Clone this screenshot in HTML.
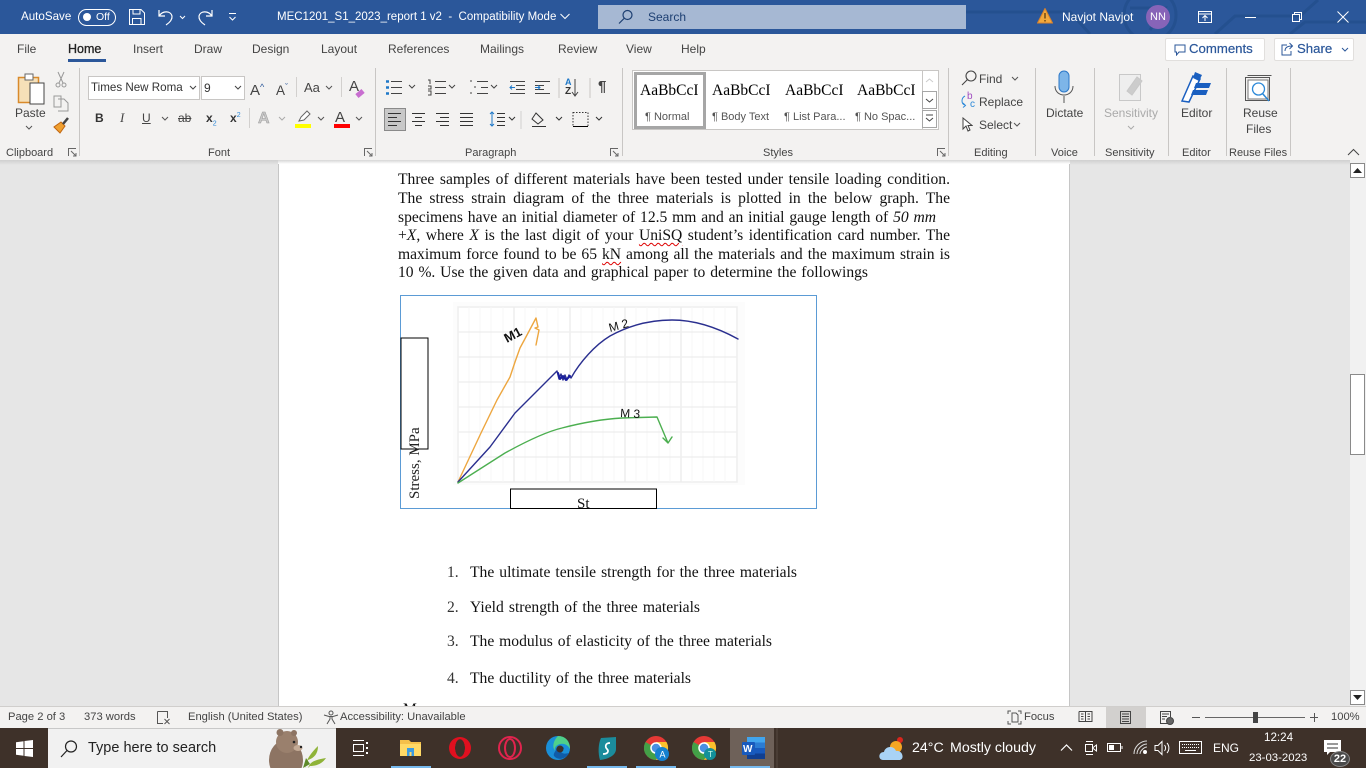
<!DOCTYPE html>
<html><head><meta charset="utf-8"><title>Word</title>
<style>
html,body{margin:0;padding:0;width:1366px;height:768px;overflow:hidden;background:#e6e6e6;font-family:"Liberation Sans",sans-serif;font-size:12px;color:#444}
.a,.t,svg{position:absolute}
.t{white-space:nowrap;line-height:16px}
.w{color:#fff}
.sep{position:absolute;top:68px;height:88px;width:1px;background:#c8c6c4}
.lab{position:absolute;top:145px;line-height:16px;font-size:11px;color:#444;white-space:nowrap;text-align:center}
.d{font-family:"Liberation Serif",serif;font-size:15.6px;line-height:19px;color:#111;position:absolute;white-space:nowrap}
.j{text-align:justify;text-align-last:justify;white-space:normal}
.sg{text-decoration:underline wavy #d00 1px;text-underline-offset:2px}
.st{position:absolute;font-family:"Liberation Serif",serif;font-size:15.5px;color:#000;top:82px;white-space:nowrap}
.sl{position:absolute;font-size:11px;color:#555;top:109px;white-space:nowrap;line-height:16px}
.ts{color:#fff;font-size:14.2px}
.ss{font-size:11.2px}
</style></head><body>

<!-- Title bar -->
<div class="a" style="left:0;top:0;width:1366px;height:34px;background:#2b579a"></div>
<svg style="left:960px;top:0" width="406" height="34" fill="none" stroke="#24508f" stroke-width="3"><circle cx="190" cy="15" r="26"/><path d="M0 12H110L130 34M170 8H205L190 30M255 34L275 16H340L358 0M330 34L345 22H406"/></svg>
<div class="t w" style="left:21px;top:9px;font-size:11.6px">AutoSave</div>
<div class="a" style="left:78px;top:9px;width:36px;height:15px;border:1px solid #fff;border-radius:9px"></div>
<div class="a" style="left:83px;top:13px;width:8px;height:8px;background:#fff;border-radius:50%"></div>
<div class="t w" style="left:96px;top:9px;font-size:10.5px">Off</div>
<svg style="left:128px;top:8px" width="18" height="18" fill="none" stroke="#fff"><path d="M1.5 1.5H13L16.5 5V16.5H1.5ZM5 1.5V6H12V1.5M4.5 16.5V10.5H13V16.5"/></svg>
<svg style="left:157px;top:8px" width="60" height="20" fill="none" stroke="#fff" stroke-width="1.2"><path d="M2 2V8H8M2 8C6 2 14 3 15 8C15.500 12 12 15 9 17"/><path d="M23 8L25.500 10.500L28 8" stroke-width="1"/><path d="M55 2V8H49M55 8C51 2 43 3 42 8C41.500 12 45 15 48 17" /></svg>
<svg style="left:228px;top:12px" width="10" height="10" fill="none" stroke="#fff"><path d="M1 1.500H8M1.500 5L4.500 8L7.500 5"/></svg>
<div class="t w" style="left:277px;top:9px;font-size:11.5px">MEC1201_S1_2023_report 1 v2&nbsp; -&nbsp; Compatibility Mode</div>
<svg style="left:560px;top:13px" width="10" height="7" fill="none" stroke="#fff"><path d="M.5 1L5 5.500L9.500 1"/></svg>
<div class="a" style="left:598px;top:5px;width:368px;height:24px;background:#a6b8d3"></div>
<svg style="left:618px;top:9px" width="16" height="16" fill="none" stroke="#1d3f72" stroke-width="1.200"><circle cx="9.500" cy="6" r="4.500"/><path d="M6 9.500L1 14.500"/></svg>
<div class="t" style="left:648px;top:9px;color:#1d3f72">Search</div>
<svg style="left:1037px;top:8px" width="16" height="16"><path d="M8 .5L15.500 15H.5Z" fill="#f3a93c" stroke="#d9822b"/><path d="M8 5V10.500M8 12V13.500" stroke="#5c3a10" stroke-width="1.300"/></svg>
<div class="t w" style="left:1062px;top:9px">Navjot Navjot</div>
<div class="a w" style="left:1146px;top:5px;width:24px;height:24px;border-radius:50%;background:#8764b8;text-align:center;line-height:24px;font-size:11px">NN</div>
<svg style="left:1198px;top:10px" width="14" height="14" fill="none" stroke="#fff"><path d="M.5 1.500H13.500V12.500H.5ZM.5 4H13.500M7 11V6M4.500 8L7 5.500L9.500 8"/></svg>
<div class="a" style="left:1245px;top:17px;width:11px;height:1px;background:#fff"></div>
<svg style="left:1291px;top:11px" width="12" height="12" fill="none" stroke="#fff"><path d="M1.500 3.500H8.500V10.500H1.500ZM3.500 3.500V1.500H10.500V8.500H8.500"/></svg>
<svg style="left:1337px;top:11px" width="12" height="12" stroke="#fff"><path d="M.5.5L11.500 11.500M11.500.5L.5 11.500"/></svg>

<!-- Ribbon -->
<div class="a" style="left:0;top:34px;width:1366px;height:126px;background:#f3f2f1"></div>
<div class="a" style="left:0;top:160px;width:1366px;height:5px;background:linear-gradient(#cfcfcf,#e6e6e6)"></div>
<div class="t" style="left:17px;top:41px">File</div>
<div class="t" style="left:68px;top:41px;font-size:12.5px;color:#222;-webkit-text-stroke:.3px #222">Home</div>
<div class="a" style="left:68px;top:59px;width:38px;height:3px;background:#2b579a"></div>
<div class="t" style="left:133px;top:41px">Insert</div>
<div class="t" style="left:194px;top:41px">Draw</div>
<div class="t" style="left:252px;top:41px">Design</div>
<div class="t" style="left:321px;top:41px">Layout</div>
<div class="t" style="left:388px;top:41px">References</div>
<div class="t" style="left:480px;top:41px">Mailings</div>
<div class="t" style="left:558px;top:41px">Review</div>
<div class="t" style="left:626px;top:41px">View</div>
<div class="t" style="left:681px;top:41px">Help</div>
<div class="a" style="left:1165px;top:38px;width:98px;height:21px;background:#fff;border:1px solid #e1dfdd;border-radius:2px"></div>
<svg style="left:1174px;top:44px" width="12" height="12" fill="none" stroke="#2b579a"><path d="M1 1H11V8H5L2.500 11V8H1Z"/></svg>
<div class="t" style="left:1189px;top:41px;color:#2b579a;font-size:13.2px;-webkit-text-stroke:.2px #2b579a">Comments</div>
<div class="a" style="left:1274px;top:38px;width:78px;height:21px;background:#fff;border:1px solid #e1dfdd;border-radius:2px"></div>
<svg style="left:1281px;top:42px" width="13" height="14" fill="none" stroke="#2b579a"><path d="M6 3H1V13H10V9M4 9C4 5 7 4 11 4M8.500 1L11.500 4L8.500 7"/></svg>
<div class="t" style="left:1297px;top:41px;color:#2b579a;font-size:13.2px;-webkit-text-stroke:.2px #2b579a">Share</div>
<svg style="left:1341px;top:47px" width="8" height="6" fill="none" stroke="#2b579a"><path d="M1 1L4 4L7 1"/></svg>

<!-- Clipboard -->
<svg style="left:17px;top:72px" width="30" height="34"><rect x="1.500" y="5.500" width="20" height="25" fill="#f6e0b8" stroke="#d98a2b" stroke-width="1.500"/><rect x="8" y="2" width="8" height="6" fill="#fff" stroke="#666"/><rect x="13" y="11" width="14" height="21" fill="#fff" stroke="#444"/></svg>
<div class="t" style="left:15px;top:105px">Paste</div>
<svg style="left:25px;top:125px" width="8" height="6" fill="none" stroke="#555"><path d="M1 1L4 4L7 1"/></svg>
<svg style="left:54px;top:71px" width="14" height="17" fill="none" stroke="#999"><circle cx="4" cy="14" r="2"/><circle cx="10" cy="14" r="2"/><path d="M5 12L10 1M9 12L4 1"/></svg>
<svg style="left:53px;top:95px" width="16" height="17" fill="none" stroke="#999"><path d="M1 1H8V12H1ZM5 4H11L15 8V16H5"/></svg>
<svg style="left:53px;top:117px" width="17" height="17"><path d="M1 10L7 16L12 9L8 5Z" fill="#f0a030" stroke="#c06510"/><path d="M10 7L15 1" stroke="#444" stroke-width="2.500"/></svg>
<div class="lab" style="left:6px">Clipboard</div>
<svg style="left:68px;top:148px" width="9" height="9" fill="none" stroke="#666"><path d="M.5 8V.5H8M3 3L8 8M8 5V8H5"/></svg>
<div class="sep" style="left:79px"></div>

<!-- Font -->
<div class="a" style="left:88px;top:76px;width:110px;height:22px;background:#fff;border:1px solid #c8c6c4"></div>
<div class="t" style="left:91px;top:80px;color:#333;font-size:11.6px">Times New Roma</div>
<svg style="left:189px;top:85px" width="8" height="6" fill="none" stroke="#444"><path d="M1 1L4 4L7 1"/></svg>
<div class="a" style="left:201px;top:76px;width:42px;height:22px;background:#fff;border:1px solid #c8c6c4"></div>
<div class="t" style="left:204px;top:80px;color:#333">9</div>
<svg style="left:234px;top:85px" width="8" height="6" fill="none" stroke="#444"><path d="M1 1L4 4L7 1"/></svg>
<div class="t" style="left:250px;top:79px;font-size:15px">A<span style="font-size:9px;color:#2b579a;vertical-align:5px">^</span></div>
<div class="t" style="left:276px;top:79px;font-size:13.500px">A<span style="font-size:9px;color:#2b579a;vertical-align:5px">ˇ</span></div>
<div class="t" style="left:304px;top:80px;font-size:13px">Aa</div>
<svg style="left:325px;top:85px" width="8" height="6" fill="none" stroke="#555"><path d="M1 1L4 4L7 1"/></svg>
<div class="a" style="left:296px;top:77px;width:1px;height:20px;background:#d2d0ce"></div>
<div class="a" style="left:341px;top:77px;width:1px;height:20px;background:#d2d0ce"></div>
<div class="t" style="left:349px;top:79px;font-size:15px">A</div>
<div class="a" style="left:356px;top:91px;width:8px;height:5px;background:#c86ed0;transform:rotate(-40deg)"></div>
<div class="t" style="left:95px;top:110px;font-weight:bold;color:#333">B</div>
<div class="t" style="left:120px;top:110px;font-style:italic;font-family:'Liberation Serif',serif;font-size:13px">I</div>
<div class="t" style="left:142px;top:110px;text-decoration:underline">U</div>
<svg style="left:161px;top:116px" width="8" height="6" fill="none" stroke="#555"><path d="M1 1L4 4L7 1"/></svg>
<div class="t" style="left:178px;top:110px;text-decoration:line-through;font-size:12px">ab</div>
<div class="t" style="left:206px;top:110px;font-weight:bold;color:#333">x<sub style="font-size:7px;color:#2b88d8;font-weight:normal">2</sub></div>
<div class="t" style="left:230px;top:110px;font-weight:bold;color:#333">x<sup style="font-size:7px;color:#2b88d8;font-weight:normal;line-height:0">2</sup></div>
<div class="a" style="left:249px;top:108px;width:1px;height:20px;background:#d2d0ce"></div>
<div class="t" style="left:258px;top:111px;font-size:16px;font-weight:bold;color:#c8c8c8;-webkit-text-stroke:.5px #999">A</div>
<svg style="left:278px;top:116px" width="8" height="6" fill="none" stroke="#aaa"><path d="M1 1L4 4L7 1"/></svg>
<svg style="left:296px;top:110px" width="17" height="14"><path d="M3 11L5 7L11 1L14 4L8 10Z" fill="#fff" stroke="#666"/></svg>
<div class="a" style="left:295px;top:124px;width:16px;height:4px;background:#ff0"></div>
<svg style="left:317px;top:116px" width="8" height="6" fill="none" stroke="#555"><path d="M1 1L4 4L7 1"/></svg>
<div class="t" style="left:335px;top:110px;font-size:15px">A</div>
<div class="a" style="left:334px;top:124px;width:16px;height:4px;background:#f00"></div>
<svg style="left:355px;top:116px" width="8" height="6" fill="none" stroke="#555"><path d="M1 1L4 4L7 1"/></svg>
<div class="lab" style="left:208px">Font</div>
<svg style="left:364px;top:148px" width="9" height="9" fill="none" stroke="#666"><path d="M.5 8V.5H8M3 3L8 8M8 5V8H5"/></svg>
<div class="sep" style="left:375px"></div>

<!-- Paragraph -->
<svg style="left:385px;top:78px" width="240" height="20" fill="none" stroke="#444">
<path d="M6 3.500H17M6 9.500H17M6 15.500H17"/><path d="M1 3.500H4M1 9.500H4M1 15.500H4" stroke="#1e78c8" stroke-width="2.500"/>
<path d="M24 7L27 10L30 7"/>
<path d="M50 3.500H61M50 9.500H61M50 15.500H61M43 2H45V6M43 8H46V11H43M43 13H46V17H43" />
<path d="M64 7L67 10L70 7"/>
<path d="M92 3.500H103M96 9.500H103M92 15.500H103M85 3H87M89 9H91M85 15H87" />
<path d="M106 7L109 10L112 7"/>
<path d="M125 3.500H140M131 7.500H140M131 11.500H140M125 15.500H140"/><path d="M130 9.500H125M127 7.500L125 9.500L127 11.500" stroke="#1e78c8"/>
<path d="M150 3.500H165M150 7.500H159M150 11.500H159M150 15.500H165"/><path d="M150 9.500H155M153 7.500L155 9.500L153 11.500" stroke="#1e78c8"/>
<path d="M174 0V20" stroke="#c8c6c4"/>
<path d="M190 1V17M187 14L190 18L193 14"/>
<path d="M205 0V20" stroke="#c8c6c4"/>
</svg>
<div class="t" style="left:565px;top:74px;font-size:9px;color:#1e78c8;font-weight:bold">A</div>
<div class="t" style="left:565px;top:84px;font-size:10px;color:#333;font-weight:bold">Z</div>
<div class="t" style="left:598px;top:79px;font-size:15px;color:#444;font-weight:bold">¶</div>
<div class="a" style="left:384px;top:108px;width:20px;height:21px;background:#c8c8c8;border:1px solid #8a8a8a"></div>
<svg style="left:386px;top:111px" width="240" height="18" fill="none" stroke="#333">
<path d="M2 2.500H15M2 6.500H11M2 10.500H15M2 14.500H11"/>
<path d="M26 2.500H39M29 6.500H36M26 10.500H39M29 14.500H36"/>
<path d="M50 2.500H63M54 6.500H63M50 10.500H63M54 14.500H63"/>
<path d="M74 2.500H87M74 6.500H87M74 10.500H87M74 14.500H87"/>
<path d="M111 2.500H119M111 6.500H119M111 10.500H119M111 14.500H119"/>
<path d="M106 1V15M104 3L106 1L108 3M104 13L106 15L108 13" stroke="#1e78c8"/>
<path d="M123 6L126 9L129 6"/>
<path d="M135 0V18" stroke="#d2d0ce"/>
<path d="M150 2L157 9L152 13L146 8ZM146 15.500H160"/>
<path d="M170 6L173 9L176 6"/>
<path d="M187 1.500H202V15.500H187Z" stroke-dasharray="1.500 1.500"/><path d="M187 15.500H202" stroke="#000"/>
<path d="M210 6L213 9L216 6"/>
</svg>
<div class="lab" style="left:465px">Paragraph</div>
<svg style="left:610px;top:148px" width="9" height="9" fill="none" stroke="#666"><path d="M.5 8V.5H8M3 3L8 8M8 5V8H5"/></svg>
<div class="sep" style="left:622px"></div>

<!-- Styles -->
<div class="a" style="left:632px;top:70px;width:305px;height:58px;background:#fff;border:1px solid #c8c6c4"></div>
<div class="a" style="left:634px;top:72px;width:66px;height:51px;border:3px solid #a6a6a6"></div>
<div class="st" style="left:640px;width:60px;overflow:hidden">AaBbCcI</div>
<div class="st" style="left:712px;width:60px;overflow:hidden">AaBbCcI</div>
<div class="st" style="left:785px;width:60px;overflow:hidden">AaBbCcI</div>
<div class="st" style="left:857px;width:60px;overflow:hidden">AaBbCcI</div>
<div class="sl" style="left:645px">¶ Normal</div>
<div class="sl" style="left:712px">¶ Body Text</div>
<div class="sl" style="left:784px">¶ List Para...</div>
<div class="sl" style="left:855px">¶ No Spac...</div>
<div class="a" style="left:922px;top:71px;width:15px;height:58px;background:#fff;border-left:1px solid #c8c6c4"></div>
<div class="a" style="left:922px;top:91px;width:15px;height:18px;background:#fff;border:1px solid #a6a6a6;box-sizing:border-box"></div>
<div class="a" style="left:922px;top:110px;width:15px;height:18px;background:#fff;border:1px solid #a6a6a6;box-sizing:border-box"></div>
<svg style="left:925px;top:77px" width="9" height="46" fill="none" stroke="#444"><path d="M1 5L4.500 2L8 5" stroke="#ccc"/><path d="M1 22L4.500 25L8 22M1 38H8M1 41L4.500 44L8 41"/></svg>
<div class="lab" style="left:763px">Styles</div>
<svg style="left:937px;top:148px" width="9" height="9" fill="none" stroke="#666"><path d="M.5 8V.5H8M3 3L8 8M8 5V8H5"/></svg>
<div class="sep" style="left:948px"></div>

<!-- Editing -->
<svg style="left:961px;top:70px" width="16" height="16" fill="none" stroke="#444" stroke-width="1.100"><circle cx="10" cy="6" r="5"/><path d="M6.500 9.500L1 15"/></svg>
<div class="t" style="left:979px;top:71px">Find</div>
<svg style="left:1011px;top:76px" width="8" height="6" fill="none" stroke="#555"><path d="M1 1L4 4L7 1"/></svg>
<div class="t" style="left:967px;top:89px;font-size:10px;color:#a04cc0">b</div>
<div class="t" style="left:970px;top:97px;font-size:10px;color:#2b88d8">c</div>
<svg style="left:960px;top:95px" width="9" height="14" fill="none" stroke="#2b88d8"><path d="M5 1C1 3 1 9 5 10M3 8L5.500 10.500L3 12.500"/></svg>
<div class="t" style="left:979px;top:94px">Replace</div>
<svg style="left:962px;top:117px" width="11" height="15" fill="#fff" stroke="#444"><path d="M1 1V12L4 9L6 14L8 13L6 8.500H10Z"/></svg>
<div class="t" style="left:979px;top:117px">Select</div>
<svg style="left:1013px;top:122px" width="8" height="6" fill="none" stroke="#555"><path d="M1 1L4 4L7 1"/></svg>
<div class="lab" style="left:974px">Editing</div>
<div class="sep" style="left:1035px"></div>

<!-- Voice -->
<svg style="left:1053px;top:70px" width="22" height="34"><rect x="6" y="1" width="10" height="21" rx="5" fill="#7db5e8" stroke="#2b78c8"/><path d="M2 16C2 28 20 28 20 16M11 26V33" fill="none" stroke="#555"/></svg>
<div class="t" style="left:1046px;top:105px">Dictate</div>
<div class="lab" style="left:1051px">Voice</div>
<div class="sep" style="left:1094px"></div>
<svg style="left:1119px;top:71px" width="26" height="30" fill="none" stroke="#c8c8c8"><rect x=".5" y="3.500" width="21" height="26" fill="#eee"/><path d="M8 20L18 6L23 10L13 24Z" fill="#ccc"/></svg>
<div class="t" style="left:1104px;top:105px;color:#aaa">Sensitivity</div>
<svg style="left:1127px;top:125px" width="8" height="6" fill="none" stroke="#aaa"><path d="M1 1L4 4L7 1"/></svg>
<div class="lab" style="left:1105px">Sensitivity</div>
<div class="sep" style="left:1168px"></div>

<!-- Editor -->
<svg style="left:1180px;top:70px" width="34" height="33"><path d="M2 31L13 6L20 9L9 32Z" fill="#fff" stroke="#1a5fc0" stroke-width="1.500"/><path d="M15 2L22 5L19 11L13 8Z" fill="#1a5fc0"/><path d="M16 13H31L29 18H14ZM13 20H28L26 25H11Z" fill="#1a5fc0"/></svg>
<div class="t" style="left:1181px;top:105px">Editor</div>
<div class="lab" style="left:1182px">Editor</div>
<div class="sep" style="left:1226px"></div>

<!-- Reuse -->
<svg style="left:1243px;top:74px" width="32" height="30" fill="none" stroke="#555"><path d="M4.500 1.500H28.500M2.500 3.500H26.500V26.500H2.500Z"/><rect x="5" y="6" width="20" height="19" fill="#fff" stroke="#777"/><circle cx="15.500" cy="15" r="6" stroke="#2b88d8" stroke-width="1.300"/><path d="M19.500 19.500L26 27" stroke="#2b88d8" stroke-width="1.500"/></svg>
<div class="t" style="left:1243px;top:105px">Reuse</div>
<div class="t" style="left:1246px;top:121px">Files</div>
<div class="lab" style="left:1229px">Reuse Files</div>
<div class="sep" style="left:1290px"></div>
<svg style="left:1347px;top:148px" width="13" height="8" fill="none" stroke="#444"><path d="M1 7L6.500 1.500L12 7"/></svg>

<!-- Document -->
<div class="a" style="left:0;top:165px;width:1349px;height:542px;background:#e6e6e6"></div>
<div class="a" style="left:278px;top:160px;width:792px;height:547px;background:#fff;border-left:1px solid #c6c6c6;border-right:1px solid #c6c6c6;box-sizing:border-box;overflow:hidden"></div>
<div class="a" style="left:278px;top:160px;width:792px;height:4px;background:linear-gradient(#d6d6d6,#fff)"></div>
<div class="d j" style="left:398px;top:170px;width:552px">Three samples of different materials have been tested under tensile loading condition.</div>
<div class="d j" style="left:398px;top:189px;width:552px">The stress strain diagram of the three materials is plotted in the below graph. The</div>
<div class="d j" style="left:398px;top:208px;width:538px">specimens have an initial diameter of 12.5 mm and an initial gauge length of <i>50 mm</i></div>
<div class="d j" style="left:398px;top:226px;width:552px">+<i>X</i>, where <i>X</i> is the last digit of your <span class="sg">UniSQ</span> student’s identification card number. The</div>
<div class="d j" style="left:398px;top:245px;width:552px">maximum force found to be 65 <span class="sg">kN</span> among all the materials and the maximum strain is</div>
<div class="d j" style="left:398px;top:263px;width:470px">10 %. Use the given data and graphical paper to determine the followings</div>

<!-- Graph -->
<svg style="left:400px;top:295px" width="417" height="214" viewBox="400 295 417 214">
<rect x="400.500" y="295.500" width="416" height="213" fill="#fff" stroke="#5b9bd5"/>
<rect x="453" y="302" width="292" height="183" fill="#fcfcfc"/>
<path d="M458 307H737V482H458Z" fill="#fff" stroke="#eeeeee" stroke-width="1.500"/>
<path d="M469 307V482M480 307V482M491 307V482M503 307V482M525 307V482M536 307V482M547 307V482M558 307V482M581 307V482M592 307V482M603 307V482M614 307V482M636 307V482M647 307V482M659 307V482M670 307V482M692 307V482M703 307V482M714 307V482M725 307V482" stroke="#f7f7f7"/>
<path d="M514 307V482M570 307V482M625 307V482M681 307V482" stroke="#ececec" stroke-width="1.300"/>
<path d="M458 332H737M458 357H737M458 382H737M458 407H737M458 432H737M458 457H737" stroke="#f0f0f0" stroke-width="1.500"/>
<g fill="none" stroke-linejoin="round" stroke-linecap="round">
<path d="M458 482L481 433L497 400L510 377L515 362L520 348L527 335L536 318L538 327L535 328L539 330L536 345" stroke="#eda63f" stroke-width="1.400"/>
<path d="M458 482L490 447L515 413L557 371L559 379L561 374L563 380L565 375L567 380L569 375L571 378C580 362 595 345 610 336C630 325 650 320 672 320C695 320 718 328 738 339" stroke="#2a2f8f" stroke-width="1.400"/>
<path d="M558 373L560 379L563 376L566 380L570 376" stroke="#1a1f9f" stroke-width="2"/>
<path d="M458 483L505 453C525 442 545 432 562 428C585 422 605 419 622 418L657 417L668 443M663 438L668 443L672 437" stroke="#4caf50" stroke-width="1.400"/>
</g>
<text transform="translate(507 343) rotate(-28)" font-family="Liberation Sans" font-size="13" font-weight="bold" fill="#111">M1</text>
<text transform="translate(610 332) rotate(-15)" font-family="Liberation Sans" font-size="12" fill="#111">M 2</text>
<text transform="translate(620 417) rotate(3)" font-family="Liberation Sans" font-size="12" fill="#111">M 3</text>
<rect x="401" y="338" width="27" height="111" fill="none" stroke="#000"/>
<rect x="510.500" y="489" width="146" height="19.500" fill="#fff" stroke="#000"/>
<text transform="translate(419 499) rotate(-90)" font-family="Liberation Serif" font-size="15" fill="#222">Stress, MPa</text>
</svg>
<div class="a" style="left:510px;top:490px;width:147px;height:18px;overflow:hidden"><div class="d" style="left:67px;top:5px;font-size:15px">St</div></div>

<!-- List -->
<div class="d" style="left:447px;top:563px;color:#333">1.</div><div class="d j" style="left:470px;top:563px;width:327px">The ultimate tensile strength for the three materials</div>
<div class="d" style="left:447px;top:598px;color:#333">2.</div><div class="d j" style="left:470px;top:598px;width:230px">Yield strength of the three materials</div>
<div class="d" style="left:447px;top:632px;color:#333">3.</div><div class="d j" style="left:470px;top:632px;width:302px">The modulus of elasticity of the three materials</div>
<div class="d" style="left:447px;top:669px;color:#333">4.</div><div class="d j" style="left:470px;top:669px;width:221px">The ductility of the three materials</div>
<div class="a" style="left:398px;top:703px;width:30px;height:4px;overflow:hidden"><div class="d" style="left:5px;top:-3px">M</div></div>

<!-- Scrollbar -->
<div class="a" style="left:1350px;top:160px;width:16px;height:547px;background:#f1f1f1"></div>
<div class="a" style="left:1350px;top:163px;width:15px;height:15px;background:#fff;border:1px solid #8a8a8a;box-sizing:border-box"></div>
<svg style="left:1353px;top:168px" width="9" height="5"><path d="M4.500 0L9 5H0Z" fill="#222"/></svg>
<div class="a" style="left:1350px;top:374px;width:15px;height:81px;background:#fff;border:1px solid #8a8a8a;box-sizing:border-box"></div>
<div class="a" style="left:1350px;top:690px;width:15px;height:15px;background:#fff;border:1px solid #8a8a8a;box-sizing:border-box"></div>
<svg style="left:1353px;top:695px" width="9" height="5"><path d="M4.500 5L9 0H0Z" fill="#222"/></svg>

<!-- Status bar -->
<div class="a" style="left:0;top:706px;width:1366px;height:22px;background:#f3f2f1;border-top:1px solid #d0cecc;box-sizing:border-box"></div>
<div class="t ss" style="left:8px;top:709px">Page 2 of 3</div>
<div class="t ss" style="left:84px;top:709px">373 words</div>
<svg style="left:156px;top:710px" width="15" height="15" fill="none" stroke="#555"><path d="M1.500 1.500H11.500V8M1.500 1.500V13.500H7M8.500 9L13.500 14M13.500 9L8.500 14"/></svg>
<div class="t ss" style="left:188px;top:709px">English (United States)</div>
<svg style="left:323px;top:710px" width="16" height="15" fill="none" stroke="#555"><circle cx="8" cy="3" r="2"/><path d="M1 5L6 6.500H10L15 5M7 7V9L4 14M9 7V9L12 14"/></svg>
<div class="t ss" style="left:340px;top:709px">Accessibility: Unavailable</div>
<svg style="left:1007px;top:710px" width="15" height="15" fill="none" stroke="#555"><path d="M1 4V1H4M11 1H14V4M14 11V14H11M4 14H1V11M5 3H9L11 5V12H5Z"/></svg>
<div class="t ss" style="left:1024px;top:709px">Focus</div>
<svg style="left:1078px;top:710px" width="15" height="13" fill="none" stroke="#444"><path d="M7.500 2V12M1 1.500H7.500M7.500 1.500H14V11.500H7.500H1V1.500M3 4H5.500M3 6.500H5.500M3 9H5.500M9.500 4H12M9.500 6.500H12M9.500 9H12"/></svg>
<div class="a" style="left:1106px;top:707px;width:40px;height:21px;background:#d2d0ce"></div>
<svg style="left:1119px;top:710px" width="13" height="15" fill="none" stroke="#444"><path d="M1.500 1.500H11.500V13.500H1.500ZM3 4H10M3 6.500H10M3 9H10M3 11.500H10"/></svg>
<svg style="left:1159px;top:710px" width="15" height="15" fill="none" stroke="#444"><path d="M9 13.500H1.500V1.500H11.500V7M3 4H10M3 6.500H8M3 9H6"/><circle cx="11" cy="11" r="3.500" fill="#666" stroke="#444"/></svg>
<div class="a" style="left:1192px;top:717px;width:8px;height:1px;background:#555"></div>
<div class="a" style="left:1205px;top:717px;width:100px;height:1px;background:#666"></div>
<div class="a" style="left:1253px;top:712px;width:5px;height:11px;background:#444"></div>
<div class="a" style="left:1310px;top:717px;width:8px;height:1px;background:#555"></div>
<div class="a" style="left:1314px;top:713px;width:1px;height:9px;background:#555"></div>
<div class="t ss" style="left:1331px;top:709px">100%</div>

<!-- Taskbar -->
<div class="a" style="left:0;top:728px;width:1366px;height:40px;background:#3e3129"></div>
<svg style="left:16px;top:740px" width="17" height="17" fill="#fff"><path d="M0 2.300L7.500 1.200V8H0ZM8.500 1L17 0V8H8.500ZM0 9H7.500V15.800L0 14.700ZM8.500 9H17V17L8.500 16Z"/></svg>
<div class="a" style="left:48px;top:728px;width:288px;height:40px;background:#f1f1f1;border-top:1px solid #c8c8c8;box-sizing:border-box"></div>
<svg style="left:60px;top:740px" width="18" height="18" fill="none" stroke="#222" stroke-width="1.200"><circle cx="11" cy="6.500" r="5.500"/><path d="M7 10.500L1 17"/></svg>
<div class="t" style="left:88px;top:740px;font-size:14.500px;color:#222">Type here to search</div>
<svg style="left:258px;top:728px" width="76" height="40">
<ellipse cx="28" cy="32" rx="17" ry="20" fill="#8d7463"/><circle cx="29" cy="14" r="11" fill="#9a806d"/><circle cx="22" cy="4.500" r="3.500" fill="#8d7463"/><circle cx="36" cy="5" r="3" fill="#8d7463"/><ellipse cx="40" cy="20" rx="4.500" ry="3" fill="#c4ab96"/><circle cx="36" cy="14" r="1.300" fill="#222"/><circle cx="43" cy="19" r="1.200" fill="#222"/>
<path d="M47 40C48 32 52 26 60 18C60 26 56 30 50 32ZM50 40C52 34 56 32 68 30C64 36 58 38 52 38Z" fill="#8fb339"/><path d="M45 40L48 30L52 36Z" fill="#5e8a2a"/>
</svg>
<svg style="left:352px;top:740px" width="18" height="16" fill="none" stroke="#fff"><path d="M1 .5H12M1 15.500H12M1.500 4.500H11.500V11.500H1.500Z"/><path d="M15 2V4M15 7V9M15 12V14" stroke-width="2"/></svg>
<svg style="left:400px;top:738px" width="22" height="20"><path d="M0 2H9L11 4H21V18H0Z" fill="#f5c04a"/><path d="M0 6H21V18H0Z" fill="#ffd966"/><path d="M7 10H14V18H11.500V14H9.500V18H7Z" fill="#3c9be0"/></svg>
<div class="a" style="left:449px;top:737px;width:22px;height:22px;border:0;border-radius:50%;background:radial-gradient(ellipse 5px 9px at center,#3e3129 95%,transparent 100%),#e0101f"></div>
<div class="a" style="left:498px;top:736px;width:24px;height:24px;border:2px solid #e0244e;box-sizing:border-box;border-radius:50%"></div>
<div class="a" style="left:504px;top:738px;width:12px;height:20px;border:2px solid #e0244e;box-sizing:border-box;border-radius:50%"></div>
<svg style="left:546px;top:736px" width="24" height="24"><circle cx="12" cy="12" r="12" fill="#1a8fd8"/><path d="M12 0C20 0 24 6 24 13C22 9 18 7 14 8C10 9 8 12 9 15C6 11 7 5 12 0Z" fill="#4fd08a"/><path d="M10 14C10 10 16 9 18 12C19 13 15 13 15 15C15 18 20 18 23 17C20 23 12 25 8 20C7 18 9 16 10 14Z" fill="#0f5ca8"/><circle cx="14" cy="13" r="3.500" fill="#3e3129"/></svg>
<svg style="left:597px;top:737px" width="20" height="24"><path d="M4 1L19 0V12C19 18 12 22 3 23C1 17 1 7 4 1Z" fill="#1b8c9c"/><path d="M13 6C8 6 8 10 10 12C12 14 11 17 6 17" fill="none" stroke="#fff" stroke-width="1.700"/></svg>
<svg style="left:644px;top:736px" width="26" height="26"><circle cx="12" cy="12" r="12" fill="#e53935"/><path d="M12 12L1.500 6A12 12 0 0 0 12 24L18 13Z" fill="#43a047"/><path d="M12 12L18 13L12 24A12 12 0 0 0 22.500 6H12Z" fill="#fbc02d"/><circle cx="12" cy="12" r="5" fill="#4a90e2" stroke="#fff" stroke-width="1.500"/><circle cx="18" cy="18" r="7" fill="#1580cf"/><text x="15.500" y="21.500" font-family="Liberation Sans" font-size="9" fill="#fff">A</text></svg>
<svg style="left:692px;top:736px" width="26" height="26"><circle cx="12" cy="12" r="12" fill="#e53935"/><path d="M12 12L1.500 6A12 12 0 0 0 12 24L18 13Z" fill="#43a047"/><path d="M12 12L18 13L12 24A12 12 0 0 0 22.500 6H12Z" fill="#fbc02d"/><circle cx="12" cy="12" r="5" fill="#4a90e2" stroke="#fff" stroke-width="1.500"/><circle cx="18" cy="18" r="6" fill="#13909a"/><text x="16" y="21" font-family="Liberation Sans" font-size="8" fill="#cfe">T</text></svg>
<div class="a" style="left:730px;top:728px;width:44px;height:40px;background:#6e6159"></div>
<svg style="left:742px;top:737px" width="24" height="22"><rect x="5" y="0" width="18" height="22" rx="1" fill="#2b7cd3"/><rect x="5" y="0" width="18" height="5.500" fill="#41a5ee"/><rect x="5" y="11" width="18" height="5.500" fill="#185abd"/><rect x="5" y="16.500" width="18" height="5.500" fill="#103f91"/><rect x="0" y="5" width="13" height="13" rx="1" fill="#185abd"/></svg>
<div class="t w" style="left:743px;top:742px;font-size:10px;font-weight:bold">W</div>
<div class="a" style="left:391px;top:766px;width:40px;height:2px;background:#76b9ed"></div>
<div class="a" style="left:587px;top:766px;width:40px;height:2px;background:#76b9ed"></div>
<div class="a" style="left:636px;top:766px;width:40px;height:2px;background:#76b9ed"></div>
<div class="a" style="left:730px;top:766px;width:40px;height:2px;background:#76b9ed"></div>
<div class="a" style="left:776px;top:728px;width:2px;height:40px;background:#4a3d35"></div>

<svg style="left:879px;top:736px" width="28" height="26"><circle cx="21" cy="4" r="3" fill="#d9261c"/><circle cx="17" cy="11" r="6" fill="#f5a623"/><path d="M4 24C-1 24 -1 16 5 16C6 10 15 9 17 15C24 14 26 24 20 24Z" fill="#a9d3f5"/></svg>
<div class="t ts" style="left:912px;top:740px">24°C</div>
<div class="t ts" style="left:950px;top:740px">Mostly cloudy</div>
<svg style="left:1060px;top:743px" width="13" height="9" fill="none" stroke="#fff" stroke-width="1.200"><path d="M1 7.500L6.500 2L12 7.500"/></svg>
<svg style="left:1084px;top:739px" width="14" height="18" fill="none" stroke="#fff"><path d="M2 2.500H9M2 15.500H9M1.500 5.500H8.500V12.500H1.500ZM8.500 9L12.500 6V12Z"/></svg>
<svg style="left:1107px;top:742px" width="16" height="11" fill="none" stroke="#fff"><path d="M.5 1.500H13.500V9.500H.5ZM15 4V7"/><rect x="2" y="3" width="5" height="5" fill="#fff" stroke="none"/></svg>
<svg style="left:1133px;top:740px" width="15" height="15" fill="none" stroke="#ddd"><path d="M1 14C1 7 7 1 14 1M4 14C4 9 9 4 14 4M7 14C7 11 11 7 14 7"/><circle cx="12" cy="12" r="2" fill="#fff" stroke="none"/></svg>
<svg style="left:1154px;top:740px" width="17" height="16" fill="none" stroke="#fff"><path d="M1 5.500H4L8 1.500V14.500L4 10.500H1ZM10.500 5C12 7 12 9 10.500 11M13 3C15.500 6 15.500 10 13 13"/></svg>
<svg style="left:1179px;top:741px" width="24" height="14" fill="none" stroke="#fff"><rect x=".5" y=".5" width="22" height="12"/><path d="M3 3.500H20M3 6.500H20" stroke-dasharray="1 1"/><path d="M6 9.500H17"/></svg>
<div class="t" style="left:1213px;top:740px;color:#fff;font-size:12px">ENG</div>
<div class="t" style="left:1264px;top:730px;color:#fff;font-size:11.6px">12:24</div>
<div class="t" style="left:1249px;top:750px;color:#fff;font-size:11.4px">23-03-2023</div>
<svg style="left:1324px;top:740px" width="18" height="17"><path d="M0 0H17V12H6L3 15V12H0Z" fill="#fff"/><path d="M3 4H14M3 8H14" stroke="#333"/></svg>
<div class="a" style="left:1330px;top:751px;width:20px;height:16px;border-radius:50%;background:#4a4a4a;border:1px solid #888;box-sizing:border-box;color:#fff;font-size:11px;font-weight:bold;text-align:center;line-height:14px">22</div>
</body></html>
